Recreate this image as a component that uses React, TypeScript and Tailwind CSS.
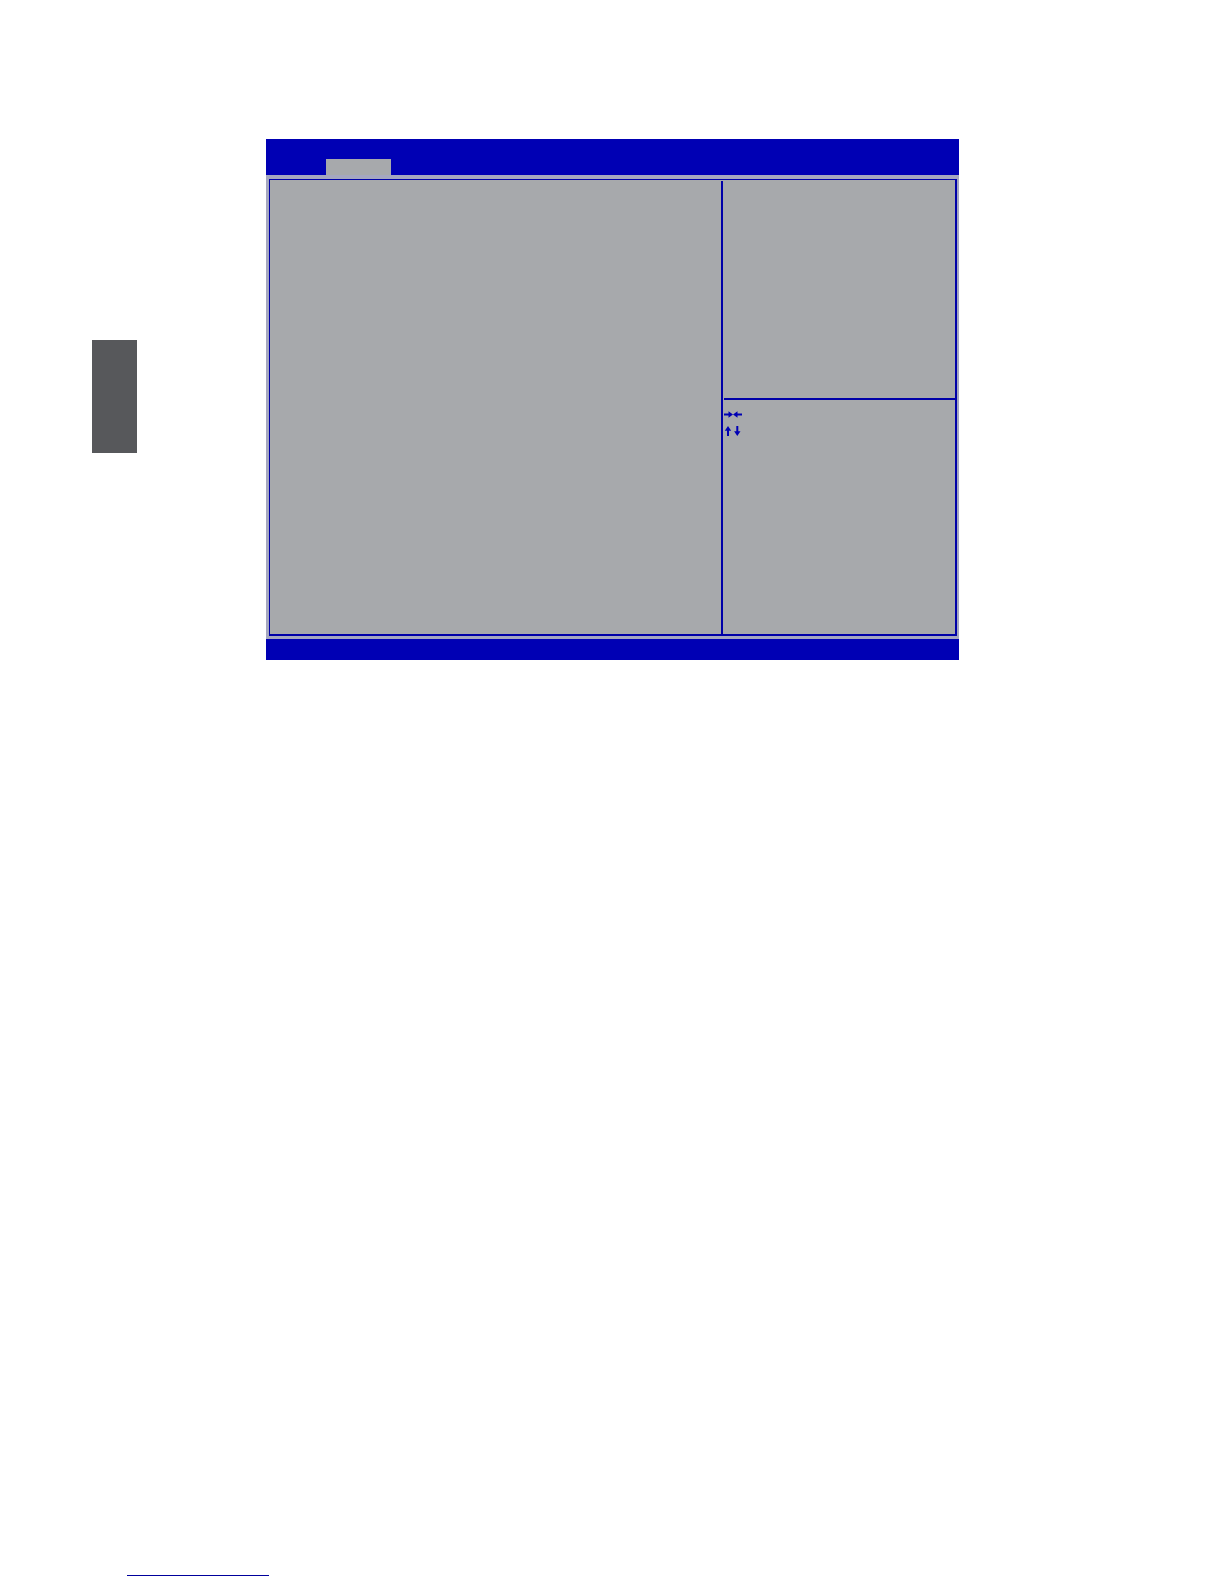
import React from 'react';

const HorizontalArrows: React.FC = () => (
  <svg width="18" height="7" viewBox="0 0 18 7" fill="#0000b4" className="block">
    <path d="M0 2.5h4.5V0.3L9 3.5 4.5 6.7V4.5H0z" />
    <path d="M18 2.5h-4.5V0.3L9 3.5l4.5 3.2V4.5H18z" />
  </svg>
);

const VerticalArrows: React.FC = () => (
  <svg width="18" height="10" viewBox="0 0 18 10" fill="#0000b4" className="block">
    <path d="M3 10V4.8H0.8L4 0l3.2 4.8H5V10z" />
    <path d="M12.3 0v5.2h-2.2l3.2 4.8 3.2-4.8h-2.2V0z" />
  </svg>
);

const App: React.FC = () => {
  return (
    <div className="flex min-h-screen flex-col justify-between bg-white font-['Liberation_Sans',sans-serif]">
      <main className="flex items-start pt-[139px] pr-[265px] pl-[92px]">
        {/* Chapter marker */}
        <aside className="mt-[201px] h-[113px] w-[45px] shrink-0 bg-[#57585b]" />

        {/* Setup screen */}
        <section className="ml-[129px] flex flex-1 flex-col bg-[#a5a7c0]">
          <header className="flex h-9 items-end bg-[#0000b4] pl-[60px]">
            <button type="button" aria-label="Advanced" className="h-4 w-[65px] bg-[#a7a9ac]" />
          </header>

          <div className="pt-1 pr-[2px] pb-[3px] pl-[3px]">
            <div className="flex min-h-[457px] border-t border-r-2 border-b-2 border-l border-[#0000a8] bg-[#a7a9ac]">
              <div className="flex-1" />
              <div className="mt-px w-[2px] bg-[#0000a8]" />
              <div className="flex w-[232px] flex-col pl-px">
                {/* Item help */}
                <div className="h-[218px]" />

                {/* Key legend */}
                <div className="flex flex-1 flex-col gap-2 border-t-2 border-[#0000a8] pt-[11px]">
                  <HorizontalArrows />
                  <VerticalArrows />
                </div>
              </div>
            </div>
          </div>

          <footer className="h-[21px] bg-[#0000b4]" />
        </section>
      </main>

      <footer className="flex pb-2 pl-[127px]">
        <a href="#top" aria-label="Back to top" className="h-4 w-[142px] border-b border-[#00009c]" />
      </footer>
    </div>
  );
};

export default App;
